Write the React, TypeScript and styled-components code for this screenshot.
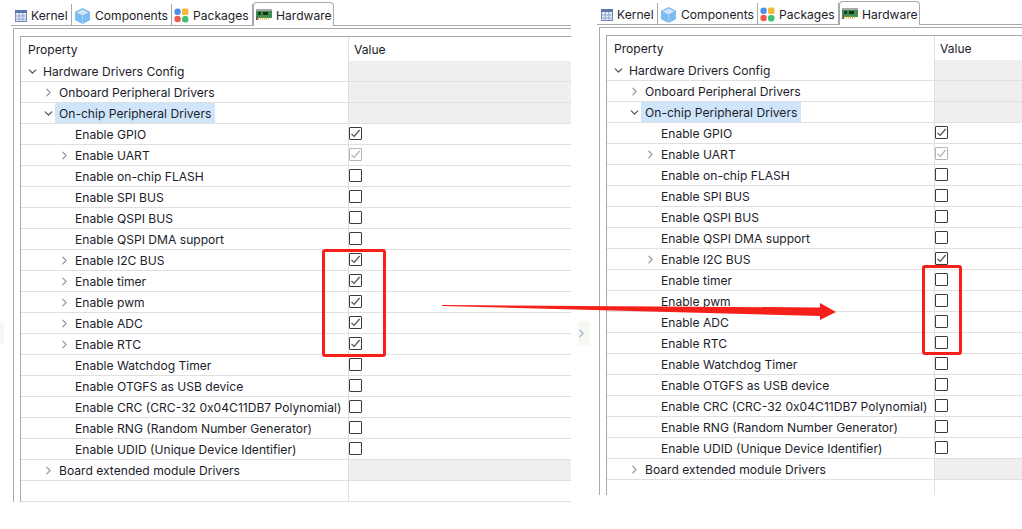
import React, { FunctionComponent } from 'react';
import styled, { createGlobalStyle } from 'styled-components';
import { ChevronDown, ChevronRight } from 'lucide-react';

type RowType = {
  label: string;
  indent: number;
  arrow?: 'open' | 'closed' | 'muted';
  selected?: boolean;
  check?: 'on' | 'off' | 'locked';
  group?: boolean;
};

const baseRows = (timers: boolean): RowType[] => {
  const timerCheck = timers ? 'on' : 'off';
  return [
    { label: 'Hardware Drivers Config', indent: 0, arrow: 'open', group: true },
    { label: 'Onboard Peripheral Drivers', indent: 1, arrow: 'muted', group: true },
    { label: 'On-chip Peripheral Drivers', indent: 1, arrow: 'open', selected: true, group: true },
    { label: 'Enable GPIO', indent: 2, check: 'on' },
    { label: 'Enable UART', indent: 2, arrow: 'muted', check: 'locked' },
    { label: 'Enable on-chip FLASH', indent: 2, check: 'off' },
    { label: 'Enable SPI BUS', indent: 2, check: 'off' },
    { label: 'Enable QSPI BUS', indent: 2, check: 'off' },
    { label: 'Enable QSPI DMA support', indent: 2, check: 'off' },
    { label: 'Enable I2C BUS', indent: 2, arrow: 'muted', check: 'on' },
    { label: 'Enable timer', indent: 2, arrow: timers ? 'muted' : undefined, check: timerCheck },
    { label: 'Enable pwm', indent: 2, arrow: timers ? 'muted' : undefined, check: timerCheck },
    { label: 'Enable ADC', indent: 2, arrow: timers ? 'muted' : undefined, check: timerCheck },
    { label: 'Enable RTC', indent: 2, arrow: timers ? 'muted' : undefined, check: timerCheck },
    { label: 'Enable Watchdog Timer', indent: 2, check: 'off' },
    { label: 'Enable OTGFS as USB device', indent: 2, check: 'off' },
    { label: 'Enable CRC (CRC-32 0x04C11DB7 Polynomial)', indent: 2, check: 'off' },
    { label: 'Enable RNG (Random Number Generator)', indent: 2, check: 'off' },
    { label: 'Enable UDID (Unique Device Identifier)', indent: 2, check: 'off' },
    { label: 'Board extended module Drivers', indent: 1, arrow: 'muted', group: true },
  ];
};

const KernelIcon = () => (
  <svg width="12" height="12" viewBox="0 0 13 12" preserveAspectRatio="none">
    <rect x="0.5" y="0.5" width="12" height="11" fill="#e6ecf6" stroke="#6d86b5" />
    <rect x="0" y="0" width="13" height="3" fill="#5b78ad" />
    <path d="M4.5 3v8M8.5 3v8M1 6h11M1 9h11" stroke="#8ea4cb" />
  </svg>
);

const ComponentsIcon = () => (
  <svg width="17" height="16" viewBox="0 0 17 16">
    <path d="M8.5 0.5 15.5 4v8l-7 3.5L1.5 12V4z" fill="#7cbcf0" stroke="#7cbcf0" strokeLinejoin="round" />
    <path d="M8.5 1.5 14.5 4.5 8.5 7.5 2.5 4.5z" fill="#cfe6fa" />
    <path d="M8.5 7.5V15" stroke="#a6d2f5" />
  </svg>
);

const PackagesIcon = () => (
  <svg width="15" height="15" viewBox="0 0 15 15">
    <circle cx="3.6" cy="3.8" r="3.2" fill="#4a90e8" />
    <rect x="8" y="0.6" width="6.4" height="6.4" rx="1.6" fill="#f6b73c" />
    <circle cx="3.6" cy="11" r="3.2" fill="#ef5a4f" />
    <rect x="8" y="8" width="6.4" height="6.4" rx="2.6" fill="#3fc178" />
  </svg>
);

const HardwareIcon = () => (
  <svg width="16" height="12" viewBox="0 0 16 12">
    <rect x="0" y="2" width="16" height="7" fill="#3f8f4f" />
    <path d="M0 1h16" stroke="#555" />
    <rect x="2" y="3" width="3" height="3" fill="#1e3d24" />
    <rect x="7" y="3" width="5" height="3" fill="#123018" />
    <path d="M2 9.5h12" stroke="#d9b23c" strokeWidth="2" strokeDasharray="1 1" />
    <rect x="0" y="7" width="2" height="4" fill="#666" />
  </svg>
);

const Tabs = [
  { label: 'Kernel', icon: <KernelIcon />, width: 59 },
  { label: 'Components', icon: <ComponentsIcon />, width: 100 },
  { label: 'Packages', icon: <PackagesIcon />, width: 81 },
  { label: 'Hardware', icon: <HardwareIcon />, width: 81, active: true },
];

const CheckBox: FunctionComponent<{ state: 'on' | 'off' | 'locked' }> = ({ state }) => (
  <Box $locked={state === 'locked'}>
    {state !== 'off' && (
      <svg width="11" height="11" viewBox="0 0 11 11">
        <path
          d="M1.5 6 4.2 8.4 9.6 2"
          fill="none"
          stroke={state === 'locked' ? '#b4b4b4' : '#555'}
          strokeWidth="1.3"
        />
      </svg>
    )}
  </Box>
);

const Row: FunctionComponent<{ row: RowType }> = ({ row }) => (
  <RowWrap>
    <NameCell $indent={row.indent}>
      <ArrowSlot $muted={row.arrow === 'muted'}>
        {row.arrow === 'open' && <ChevronDown size={arrowSize} strokeWidth={2.4} />}
        {row.arrow === 'muted' && <ChevronRight size={arrowSize} strokeWidth={2.4} />}
      </ArrowSlot>
      <Label $selected={row.selected}>{row.label}</Label>
    </NameCell>
    <ValueCell $group={row.group}>{row.check && <CheckBox state={row.check} />}</ValueCell>
  </RowWrap>
);

const Panel: FunctionComponent<{ timers: boolean; width: number; offset: number; spare: number; ruled: boolean }> = ({
  timers,
  width,
  offset,
  spare,
  ruled,
}) => (
  <PanelWrap $width={width} $offset={offset}>
    <TabStrip>
      {Tabs.map((t) => (
        <Tab key={t.label} $active={t.active} $width={t.width}>
          {t.icon}
          <span>{t.label}</span>
        </Tab>
      ))}
    </TabStrip>
    <Frame>
      <Table>
        <Header>
          <HeadCell>Property</HeadCell>
          <HeadCell $value>Value</HeadCell>
        </Header>
        {baseRows(timers).map((r) => (
          <Row key={r.label} row={r} />
        ))}
        <Spare $height={spare} $ruled={ruled}>
          <NameCell $indent={0} />
          <ValueCell />
        </Spare>
      </Table>
    </Frame>
  </PanelWrap>
);

export default function App() {
  return (
    <>
      <GlobalStyle />
      <Page>
        <Panel timers width={560} offset={1} spare={21} ruled />
        <Handle>
          <ChevronRight size={13} color="#8fb4d8" strokeWidth={2} />
        </Handle>
        <Panel timers={false} width={425} offset={0} spare={15} ruled={false} />
        <EdgeMark />
        <RedBox $left={322} $top={249} $width={64} $height={108} />
        <RedBox $left={922} $top={265} $width={40} $height={90} />
        <Arrow width="400" height="24" viewBox="0 0 400 24">
          <path d="M0 3 L378 5.5 L378 1 L394 10 L378 18 L378 14 L0 4 Z" fill="#f5201a" />
        </Arrow>
      </Page>
    </>
  );
}

const arrowSize = 13;
const lineColor = '#e0e0e0';
const frameColor = '#a9a9ad';

const GlobalStyle = createGlobalStyle`
  html, body {
    margin: 0;
    background: #fff;
    overflow: hidden;
  }
  * {
    box-sizing: border-box;
  }
`;

const Page = styled.div`
  position: relative;
  width: 1022px;
  height: 529px;
  padding: 1px 0 0 11px;
  display: flex;
  align-items: flex-start;
  font-family: 'Inter', 'Noto Sans', sans-serif;
  font-size: 12.1px;
  color: #1c1c2a;
  overflow: hidden;
`;

const PanelWrap = styled.div<{ $width: number; $offset: number }>`
  width: ${(p) => p.$width}px;
  margin-top: ${(p) => p.$offset}px;
  flex: none;
  display: flex;
  flex-direction: column;
`;

const TabStrip = styled.div`
  height: 24px;
  display: flex;
  align-items: flex-end;
  padding-left: 2px;
  border-bottom: 1px solid ${frameColor};
`;

const Tab = styled.div<{ $active?: boolean; $width: number }>`
  width: ${(p) => p.$width}px;
  height: ${(p) => (p.$active ? '24px' : '21px')};
  display: flex;
  align-items: center;
  gap: 4px;
  padding-left: 2px;
  padding-top: 2px;
  flex: none;
  background: #fff;
  white-space: nowrap;
  border-right: 1px solid ${frameColor};
  ${(p) =>
    p.$active &&
    `
    border: 1px solid ${frameColor};
    border-bottom: none;
    border-radius: 4px 4px 0 0;
    margin-bottom: -1px;
    padding-top: 1px;
  `}
`;

const Frame = styled.div`
  margin: 2px 0 0 2px;
  padding: 7px 0 0 6px;
  border-top: 1px solid ${frameColor};
  border-left: 1px solid ${frameColor};
`;

const Table = styled.div`
  border-top: 1px solid ${frameColor};
  border-left: 1px solid ${frameColor};
`;

const Header = styled.div`
  display: grid;
  grid-template-columns: 327px 1fr;
  height: 24px;
`;

const HeadCell = styled.div<{ $value?: boolean }>`
  display: flex;
  align-items: center;
  padding-left: ${(p) => (p.$value ? '5px' : '7px')};
  border-left: ${(p) => (p.$value ? `1px solid ${lineColor}` : 'none')};
`;

const RowWrap = styled.div`
  display: grid;
  grid-template-columns: 327px 1fr;
  height: 21px;
  border-bottom: 1px solid ${lineColor};
`;

const Spare = styled.div<{ $height: number; $ruled: boolean }>`
  display: grid;
  grid-template-columns: 327px 1fr;
  height: ${(p) => p.$height}px;
  border-bottom: ${(p) => (p.$ruled ? `1px solid ${lineColor}` : 'none')};
`;

const NameCell = styled.div<{ $indent: number }>`
  display: flex;
  align-items: stretch;
  padding-left: ${(p) => 5 + p.$indent * 16}px;
  white-space: nowrap;
  min-width: 0;
`;

const ArrowSlot = styled.span<{ $muted?: boolean }>`
  width: 13px;
  flex: none;
  display: flex;
  align-items: center;
  color: ${(p) => (p.$muted ? '#a0a0a0' : '#55555f')};
`;

const Label = styled.span<{ $selected?: boolean }>`
  display: flex;
  align-items: center;
  padding: 0 4px 0 4px;
  background: ${(p) => (p.$selected ? '#cfe6fa' : 'transparent')};
`;

const ValueCell = styled.div<{ $group?: boolean }>`
  display: flex;
  align-items: center;
  border-left: 1px solid ${lineColor};
  background: ${(p) => (p.$group ? '#efefef' : 'transparent')};
`;

const Box = styled.span<{ $locked?: boolean }>`
  width: 13px;
  height: 13px;
  margin-bottom: 2px;
  display: flex;
  align-items: center;
  justify-content: center;
  background: #fff;
  border: 1px solid ${(p) => (p.$locked ? '#b4b4b4' : '#3a3a3a')};
  border-radius: 1px;
`;

const Handle = styled.div`
  width: 12px;
  height: 24px;
  flex: none;
  margin: 320px 7px 0 7px;
  display: flex;
  align-items: center;
  background: #f7f8f4;
  svg {
    margin-left: -3px;
  }
`;

const EdgeMark = styled.div`
  position: absolute;
  left: 0;
  top: 322px;
  width: 4px;
  height: 23px;
  background: #f7f8f4;
`;

const RedBox = styled.div<{ $left: number; $top: number; $width: number; $height: number }>`
  position: absolute;
  left: ${(p) => p.$left}px;
  top: ${(p) => p.$top}px;
  width: ${(p) => p.$width}px;
  height: ${(p) => p.$height}px;
  border: 3px solid #f5201a;
  border-radius: 3px;
`;

const Arrow = styled.svg`
  position: absolute;
  left: 442px;
  top: 302px;
`;
